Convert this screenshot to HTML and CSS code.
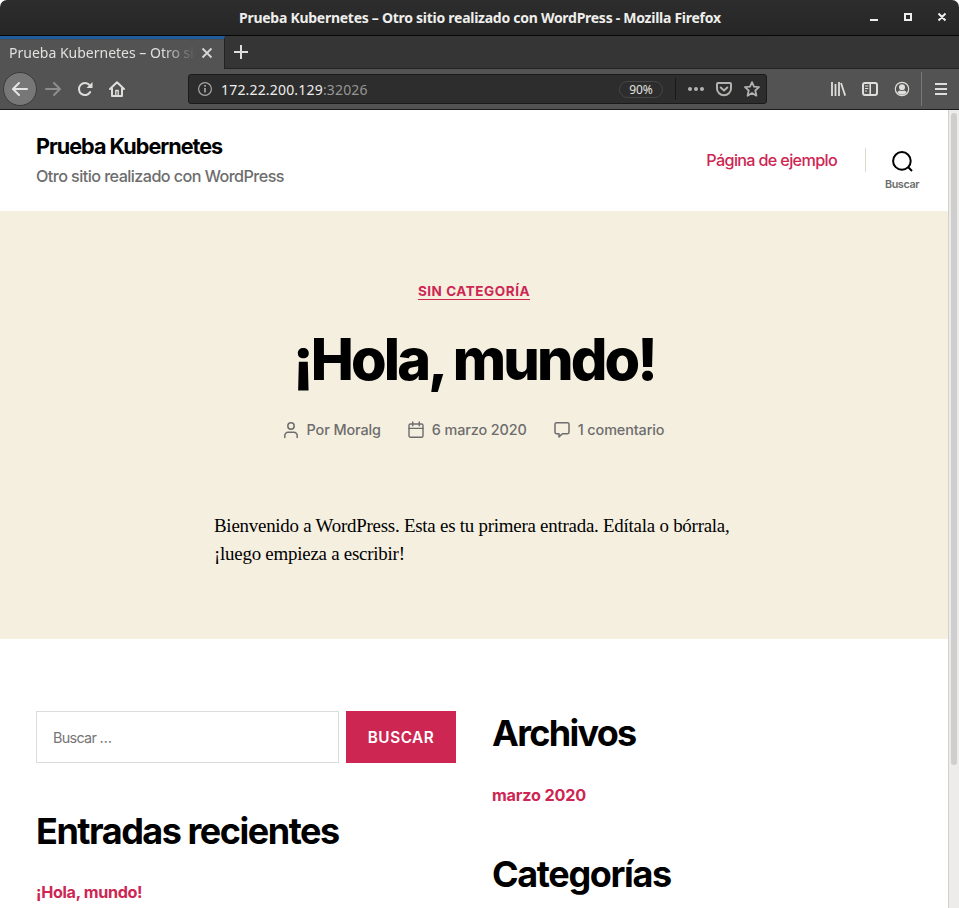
FILE: index.html
```html
<!DOCTYPE html>
<html lang="es">
<head>
<meta charset="utf-8">
<title>Prueba Kubernetes – Otro sitio realizado con WordPress</title>
<link rel="stylesheet" href="styles.css">
</head>
<body>
<div class="window">
  <header class="titlebar">
    <span class="window-title">Prueba Kubernetes – Otro sitio realizado con WordPress - Mozilla Firefox</span>
    <svg class="window-controls" width="82" height="12" viewBox="0 0 82 12" fill="none" stroke="#eeeeec" stroke-width="2">
      <path d="M2 9H10M37 3H43V9H37ZM70.5 2.5 77.5 9.5M77.5 2.5 70.5 9.5"/>
    </svg>
  </header>
  <div class="tabs">
    <div class="tab">
      <span class="tab-label">Prueba Kubernetes – Otro sitio</span>
      <svg class="tab-close" width="12" height="12" viewBox="0 0 12 12" stroke="#d6d6d4" stroke-width="1.8"><path d="M1.5 1.5 10.5 10.5M10.5 1.5 1.5 10.5"/></svg>
    </div>
    <div class="new-tab"><svg width="14" height="14" viewBox="0 0 14 14" stroke="#dededc" stroke-width="2"><path d="M7 0V14M0 7H14"/></svg></div>
  </div>
  <nav class="toolbar">
    <div class="back"><svg width="16" height="16" viewBox="0 0 16 16" fill="none" stroke="#e4e4e2" stroke-width="2" stroke-linecap="round" stroke-linejoin="round"><path d="M15 8H1.5M7 2 1 8 7 14"/></svg></div>
    <svg class="forward" width="16" height="16" viewBox="0 0 16 16" fill="none" stroke="#8d8d8b" stroke-width="2" stroke-linecap="round" stroke-linejoin="round"><path d="M1 8H14.5M9 2 15 8 9 14"/></svg>
    <svg class="reload" width="16" height="16" viewBox="0 0 16 16" fill="none" stroke="#dededc" stroke-width="2" stroke-linecap="round"><path d="M13.2 11A6 6 0 1 1 12.6 4.2"/><path d="M15.5 1V7H9.5Z" fill="#dededc" stroke="none"/></svg>
    <svg class="home" width="16" height="16" viewBox="0 0 16 16" fill="none" stroke="#dededc" stroke-width="2" stroke-linecap="round" stroke-linejoin="round"><path d="M1 8 8 1.2 15 8M3 7.5V15H13V7.5"/><path d="M6.8 14.5V9.5H9.2V14.5" stroke-width="1.4"/></svg>
    <div class="urlbar">
      <svg class="info" width="14" height="14" viewBox="0 0 14 14" fill="none" stroke="#a6a6a4"><circle cx="7" cy="7" r="6.4" stroke-width="1.2"/><path d="M7 6V10.5M7 3V4.7" stroke-width="1.7"/></svg>
      <span class="url"><b>172.22.200.129</b>:32026</span>
      <span class="zoom">90%</span>
      <span class="url-divider"></span>
      <svg class="dots" width="16" height="16" viewBox="0 0 16 16" fill="#b2b2b0"><circle cx="2" cy="8" r="2"/><circle cx="8" cy="8" r="2"/><circle cx="14" cy="8" r="2"/></svg>
      <svg class="pocket" width="16" height="16" viewBox="0 0 16 16" fill="none" stroke="#b2b2b0" stroke-width="2" stroke-linecap="round" stroke-linejoin="round"><path d="M2 2H14A1 1 0 0 1 15 3V7.5A7 6.7 0 0 1 1 7.5V3A1 1 0 0 1 2 2Z"/><path d="M4.7 6.5 8 9.6 11.3 6.5"/></svg>
      <svg width="16" height="16" viewBox="0 0 16 16" fill="none" stroke="#b2b2b0" stroke-width="1.8" stroke-linejoin="round"><path d="M8 1.1 10 5.7 15 6.2 11.3 9.5 12.4 14.7 8 12 3.6 14.7 4.7 9.5 1 6.2 6 5.7Z"/></svg>
    </div>
    <div class="tools">
      <svg width="16" height="16" viewBox="0 0 16 16" stroke="#dededc" stroke-width="2"><path d="M2 1V15M5.5 3V15M9 1V15" stroke-width="1.8"/><path d="M11 2 15.2 14.6" stroke-width="1.8"/></svg>
      <svg width="16" height="16" viewBox="0 0 16 16" fill="none" stroke="#dededc" stroke-width="2"><rect x="1" y="2" width="14" height="12" rx="2"/><path d="M8.2 2V14" stroke-width="1.6"/><path d="M3 5H6.3M3 7.5H6.3M3 10H5" stroke-width="1"/></svg>
      <svg width="16" height="16" viewBox="0 0 16 16" fill="none" stroke="#dededc"><circle cx="8" cy="8" r="6.7" stroke-width="1.2"/><circle cx="8" cy="6.3" r="3" fill="#dededc" stroke="none"/><path d="M3.2 11.2Q5 9.2 6 9.4 8 10.5 10 9.4 11 9.2 12.8 11.2 11 13.8 8 13.8 5 13.8 3.2 11.2Z" fill="#dededc" stroke="none"/></svg>
    </div>
    <div class="menu"><svg width="12" height="12" viewBox="0 0 12 12" stroke="#dededc" stroke-width="2"><path d="M0 1H12M0 6H12M0 11H12"/></svg></div>
  </nav>
  <div class="viewport">
    <div class="page">
      <header class="site-header">
        <div class="branding">
          <div class="site-title">Prueba Kubernetes</div>
          <div class="tagline">Otro sitio realizado con WordPress</div>
        </div>
        <a class="nav-link">Página de ejemplo</a>
        <span class="header-divider"></span>
        <div class="search-toggle">
          <svg width="21" height="21" viewBox="0 0 21 21" fill="none" stroke="#000" stroke-width="2"><circle cx="9.9" cy="9.9" r="8.8"/><path d="M16 16 20 20"/></svg>
          <span>Buscar</span>
        </div>
      </header>
      <article class="post">
        <a class="category">Sin categoría</a>
        <h1>¡Hola, mundo!</h1>
        <div class="meta">
          <span class="meta-item author"><svg width="16" height="18" viewBox="0 0 16 18" fill="none" stroke="#6d6d6d" stroke-width="1.5" stroke-linecap="round"><circle cx="8" cy="5" r="3.2"/><path d="M1.8 16.4V14.6A3.3 3.3 0 0 1 5.1 11.3H10.9A3.3 3.3 0 0 1 14.2 14.6V16.4"/></svg>Por Moralg</span>
          <span class="meta-item date"><svg width="16" height="18" viewBox="0 0 16 18" fill="none" stroke="#6d6d6d" stroke-width="1.4" stroke-linecap="round"><rect x="1" y="3" width="14" height="13.3" rx="1.5"/><path d="M1 7.4H15M4.7 1V4.8M11.3 1V4.8"/></svg>6 marzo 2020</span>
          <span class="meta-item comments"><svg width="16" height="18" viewBox="0 0 16 18" fill="none" stroke="#6d6d6d" stroke-width="1.5" stroke-linejoin="round"><path d="M2.5 1.7H13.5A1.5 1.5 0 0 1 15 3.2V11.2A1.5 1.5 0 0 1 13.5 12.7H8.4L5 15.9V12.7H2.5A1.5 1.5 0 0 1 1 11.2V3.2A1.5 1.5 0 0 1 2.5 1.7Z"/></svg>1 comentario</span>
        </div>
        <p>Bienvenido a WordPress. Esta es tu primera entrada. Edítala o bórrala, ¡luego empieza a escribir!</p>
      </article>
      <footer class="widgets">
        <section>
          <form class="search-form"><input type="text" placeholder="Buscar …"><button type="button">BUSCAR</button></form>
          <h2 class="recent-title">Entradas recientes</h2>
          <a class="widget-link recent">¡Hola, mundo!</a>
        </section>
        <section>
          <h2 class="archive-title">Archivos</h2>
          <a class="widget-link archive">marzo 2020</a>
          <h2>Categorías</h2>
        </section>
      </footer>
    </div>
    <div class="scrollbar"><div class="thumb"></div></div>
  </div>
</div>
</body>
</html>
```
FILE: styles.css
```css
* { box-sizing: border-box; }
body { margin: 0; overflow: hidden; background: #fff; }
svg { display: block; flex: none; }
h1, h2, p { margin: 0; }

.window {
  display: flex;
  flex-direction: column;
  height: 908px;
  font-family: "Noto Sans", sans-serif;
  white-space: nowrap;
}

.titlebar {
  display: flex;
  align-items: center;
  height: 36px;
  padding: 0 9px 0 239px;
  background: linear-gradient(#2d2d2d, #262626);
  border-bottom: 1px solid #070707;
  border-radius: 7px 7px 0 0;
  color: #eeeeec;
}
.window-title { width: 483px; font-size: 14px; font-weight: 700; letter-spacing: -0.27px; }
.window-controls { margin: 0 0 1px auto; }

.tabs { display: flex; height: 33px; background: #353535; }
.tab {
  display: flex;
  align-items: center;
  width: 225px;
  padding-left: 9px;
  background: #535353;
  border-top: 3px solid #215d9c;
  border-right: 1px solid #232323;
  color: #e0e0de;
  box-shadow: inset 0 1px #4d4d4d;
}
.tab-label {
  width: 185px;
  margin: 0 7px 3px 0;
  overflow: hidden;
  font-size: 14px;
  -webkit-mask-image: linear-gradient(90deg, #000 153px, transparent 187px);
  mask-image: linear-gradient(90deg, #000 153px, transparent 187px);
}
.tab-close { margin-bottom: 2px; }
.new-tab { flex: 1; padding: 9px 0 0 9px; border-bottom: 1px solid #232323; }

.toolbar {
  display: flex;
  align-items: center;
  height: 41px;
  padding-left: 3px;
  background: #535353;
  border-bottom: 1px solid #1c1c1c;
}
.back {
  display: grid;
  place-items: center;
  width: 34px;
  height: 34px;
  border: 1px solid #3b3b3b;
  border-radius: 50%;
  background: #777;
}
.forward { margin-left: 8px; }
.reload { margin-left: 16px; }
.home { margin-left: 16px; }
.urlbar {
  display: flex;
  align-items: center;
  width: 579px;
  height: 30px;
  margin-left: 63px;
  padding-left: 9px;
  background: #2d2d2d;
  border: 1px solid #1b1b1b;
  border-radius: 3px;
}
.url { width: 398px; margin-left: 9px; font-size: 14px; letter-spacing: 0.18px; color: #969694; }
.url b { font-weight: 400; color: #eeeeec; }
.zoom {
  width: 44px;
  height: 17px;
  border: 1px solid #474747;
  border-radius: 9px;
  color: #e2e2e0;
  font-size: 12px;
  line-height: 15px;
  text-align: center;
}
.url-divider { width: 1px; height: 22px; margin: 0 12px; background: #191919; }
.pocket { margin: 0 12px; }
.tools { display: flex; gap: 16px; margin-left: 63px; }
.menu {
  display: grid;
  place-items: center;
  width: 38px;
  height: 34px;
  margin-left: 11px;
  border-left: 1px solid #777;
}

.viewport { display: flex; flex: 1; min-height: 0; }
.page { width: 948px; overflow: hidden; font-family: Inter, sans-serif; white-space: normal; }
.scrollbar { width: 11px; padding: 3px 2px 0 2px; background: #edecea; border-left: 1px solid #d3cfcb; }
.thumb { width: 6px; height: 652px; border-radius: 3px; background: #cecece; }

.site-header { display: flex; height: 101px; padding: 22px 29px 0 36px; }
.branding { flex: 1; font-weight: 500; }
.site-title { font-size: 21.6px; font-weight: 700; line-height: 28px; letter-spacing: -1px; }
.tagline { margin-top: 6px; font-size: 16.2px; line-height: 20px; letter-spacing: -0.57px; color: #6d6d6d; }
.nav-link { margin-top: 18px; font-size: 16.2px; font-weight: 500; line-height: 20px; letter-spacing: -0.67px; color: #cd2653; }
.header-divider { width: 1px; height: 24px; margin: 16px 19px 0 28px; background: #dcd7ca; }
.search-toggle { display: flex; flex-direction: column; align-items: center; width: 34px; padding-top: 19px; }
.search-toggle span { margin-top: 6px; font-size: 10.8px; font-weight: 600; line-height: 14px; letter-spacing: -0.4px; color: #6d6d6d; }

.post {
  display: flex;
  flex-direction: column;
  align-items: center;
  height: 428px;
  padding-top: 72px;
  background: #f5efe0;
}
.category { border-bottom: 1px solid #cd2653; color: #cd2653; font-size: 13.5px; font-weight: 700; line-height: 16px; letter-spacing: 0.55px; text-transform: uppercase; }
h1 { margin-top: 24px; font-size: 57.6px; font-weight: 800; line-height: 70px; letter-spacing: -2.9px; }
.meta { display: flex; gap: 27px; margin: 26px 1px 0 0; font-size: 14.4px; font-weight: 500; line-height: 20px; letter-spacing: -0.1px; color: #6d6d6d; }
.meta-item { display: flex; align-items: center; gap: 8px; }
.post p { width: 522px; margin: 72px 0 0 2px; font-family: "Liberation Serif", serif; font-size: 18.9px; line-height: 28.35px; letter-spacing: -0.23px; }

.widgets { display: grid; grid-template-columns: 420px 420px; gap: 36px; padding: 72px 36px 0; }
.search-form { display: flex; gap: 7px; height: 52px; }
.search-form input { width: 303px; padding: 0 16px; border: 1px solid #dcdcdc; font: 14.4px Inter, sans-serif; letter-spacing: -0.7px; }
.search-form input::placeholder { color: #757575; }
.search-form button { width: 110px; padding: 0; border: 0; background: #cd2653; color: #fff; font: 600 15.3px Inter, sans-serif; letter-spacing: 0.55px; }
h2 { font-size: 36px; font-weight: 700; line-height: 44px; letter-spacing: -1.35px; }
.recent-title { margin-top: 46px; letter-spacing: -1.48px; }
.archive-title { letter-spacing: -1.7px; }
.widget-link { display: block; margin-top: 29px; color: #cd2653; font-size: 16.2px; font-weight: 700; line-height: 22px; }
.recent { margin-top: 28px; letter-spacing: -0.33px; }
.archive { margin-bottom: 46px; letter-spacing: -0.17px; }
```
